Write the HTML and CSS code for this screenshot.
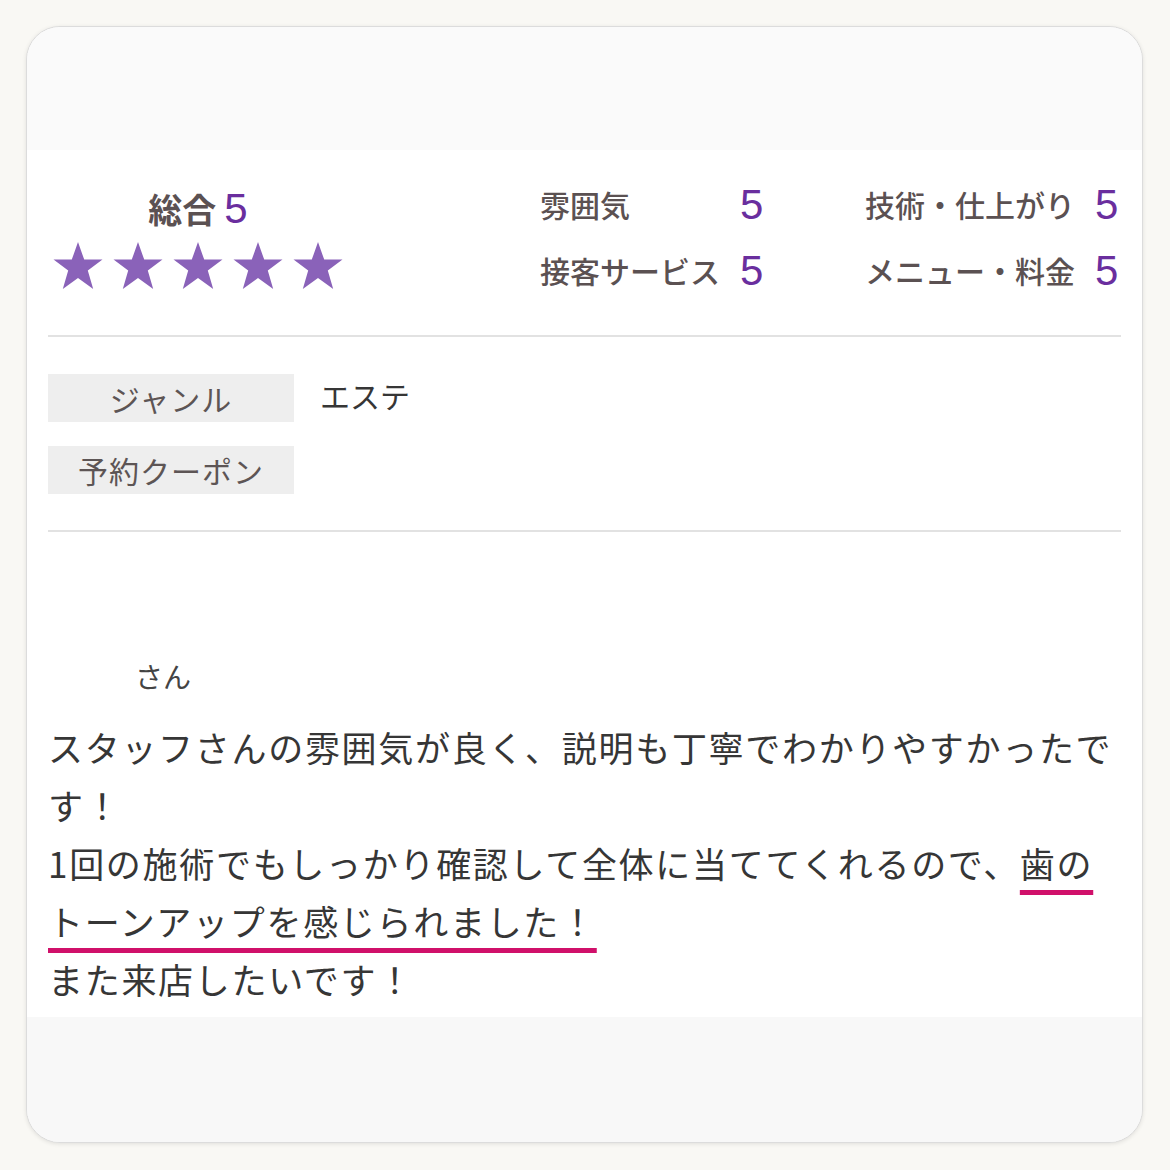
FILE: index.html
```html
<!DOCTYPE html>
<html lang="ja">
<head>
    <meta charset="UTF-8">
    <meta name="viewport" content="width=device-width, initial-scale=1.0">
    <title>口コミ</title>
    <link rel="stylesheet" href="styles.css">
</head>
<body>
    <div class="card">
        <div class="card-top"></div>

        <div class="card-body">
            <!-- rating -->
            <div class="rating">
                <div class="total">
                    <div class="total-head">
                        <span class="total-label">総合</span><span class="score">5</span>
                    </div>
                    <div class="stars">
                        <svg viewBox="0 0 50 50"><path d="M25 1 L31.2 18.6 L49.5 18.6 L34.8 29.6 L40.2 48 L25 37 L9.8 48 L15.2 29.6 L0.5 18.6 L18.8 18.6 Z"/></svg>
                        <svg viewBox="0 0 50 50"><path d="M25 1 L31.2 18.6 L49.5 18.6 L34.8 29.6 L40.2 48 L25 37 L9.8 48 L15.2 29.6 L0.5 18.6 L18.8 18.6 Z"/></svg>
                        <svg viewBox="0 0 50 50"><path d="M25 1 L31.2 18.6 L49.5 18.6 L34.8 29.6 L40.2 48 L25 37 L9.8 48 L15.2 29.6 L0.5 18.6 L18.8 18.6 Z"/></svg>
                        <svg viewBox="0 0 50 50"><path d="M25 1 L31.2 18.6 L49.5 18.6 L34.8 29.6 L40.2 48 L25 37 L9.8 48 L15.2 29.6 L0.5 18.6 L18.8 18.6 Z"/></svg>
                        <svg viewBox="0 0 50 50"><path d="M25 1 L31.2 18.6 L49.5 18.6 L34.8 29.6 L40.2 48 L25 37 L9.8 48 L15.2 29.6 L0.5 18.6 L18.8 18.6 Z"/></svg>
                    </div>
                </div>
                <div class="details">
                    <span class="detail-label">雰囲気</span><span class="score">5</span>
                    <span class="detail-label">技術・仕上がり</span><span class="score">5</span>
                    <span class="detail-label">接客サービス</span><span class="score">5</span>
                    <span class="detail-label">メニュー・料金</span><span class="score">5</span>
                </div>
            </div>

            <!-- tags -->
            <dl class="info">
                <div class="info-row">
                    <dt>ジャンル</dt>
                    <dd>エステ</dd>
                </div>
                <div class="info-row">
                    <dt>予約クーポン</dt>
                    <dd></dd>
                </div>
            </dl>

            <!-- review -->
            <div class="review">
                <p class="reviewer"><span class="nickname"></span>さん</p>
                <p class="review-text">スタッフさんの雰囲気が良く、説明も丁寧でわかりやすかったです！<br>1回の施術でもしっかり確認して全体に当ててくれるので、<span class="mark">歯のトーンアップを感じられました！</span><br>また来店したいです！</p>
            </div>
        </div>

        <div class="card-bottom"></div>
    </div>
</body>
</html>
```

FILE: styles.css
```css
/* General Styles */
body {
    margin: 0;
    padding: 26px 27px 26px 26px;
    background-color: #f9f8f4;
    font-family: "Noto Sans CJK JP", sans-serif;
    color: #363636;
}

.card {
    height: 1117px;
    box-sizing: border-box;
    display: flex;
    flex-direction: column;
    border: 1px solid #dcdcdc;
    border-radius: 34px;
    overflow: hidden;
    background: #fafafa;
    box-shadow: 0 1px 4px rgba(0, 0, 0, 0.1);
}

.card-top {
    height: 123px;
    background: #fafafa;
}

.card-body {
    background: #ffffff;
    padding: 0 21px 9px;
}

.card-bottom {
    flex: 1;
    background: #f8f8f8;
}

/* Rating */
.rating {
    display: flex;
    padding: 38px 0 0;
    height: 147px;
    border-bottom: 2px solid #e2e2e2;
}

.total {
    width: 300px;
    display: flex;
    flex-direction: column;
    align-items: center;
}

.total-head {
    display: flex;
    align-items: baseline;
    gap: 8px;
    height: 42px;
    line-height: 42px;
}

.total-label {
    font-size: 34px;
    font-weight: 700;
    color: #5b5152;
}

.score {
    font-family: "Liberation Sans", Arial, sans-serif;
    font-size: 42px;
    color: #6a2e9e;
}

.stars {
    display: flex;
    gap: 10px;
    margin-top: 11px;
}

.stars svg {
    width: 50px;
    height: 50px;
    fill: #8a62b9;
}

.details {
    margin-left: 192px;
    display: grid;
    grid-template-columns: 200px 125px 230px auto;
    grid-auto-rows: 66px;
    align-items: baseline;
    margin-top: -16px;
    line-height: 66px;
}

.detail-label {
    font-size: 30px;
    font-weight: 500;
    color: #5b5152;
    position: relative;
    top: -2px;
}

/* Tags */
.info {
    margin: 0;
    padding: 37px 0 36px;
    display: flex;
    flex-direction: column;
    gap: 24px;
    border-bottom: 2px solid #e2e2e2;
}

.info-row {
    display: flex;
    align-items: flex-start;
}

.info dt {
    width: 246px;
    height: 48px;
    line-height: 48px;
    background: #eeeeee;
    text-align: center;
    font-size: 30px;
    color: #5d5555;
    letter-spacing: 1px;
}

.info dd {
    margin: 0 0 0 26px;
    line-height: 42px;
    font-size: 30px;
    color: #363636;
}

/* Review */
.review {
    padding-top: 124px;
}

.reviewer {
    margin: 0 0 22px;
    font-size: 28px;
    line-height: 40px;
    color: #444444;
}

.nickname {
    display: inline-block;
    width: 87px;
}

.review-text {
    margin: 0;
    font-size: 35px;
    line-height: 58px;
    letter-spacing: 1.7px;
}

.mark {
    text-decoration: underline;
    text-decoration-color: #d0106a;
    text-decoration-thickness: 5px;
    text-underline-offset: 12px;
}
```
